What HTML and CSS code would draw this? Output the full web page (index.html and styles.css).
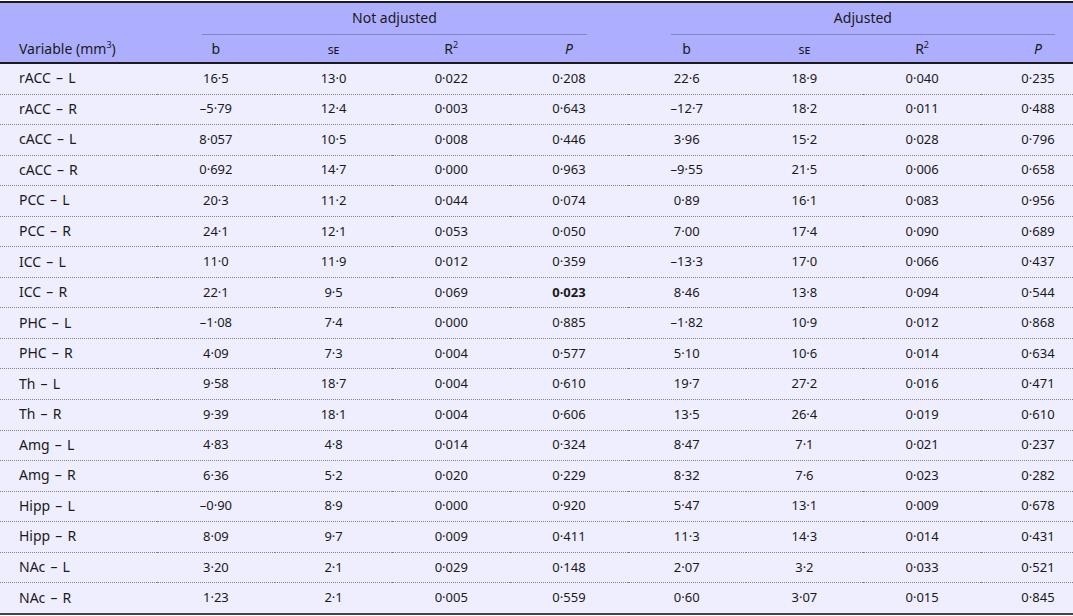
FILE: index.html
```html
<!DOCTYPE html>
<html>
<head>
<meta charset="utf-8">
<link rel="stylesheet" href="styles.css">
</head>
<body>
<table class="tbl">
<colgroup>
<col class="c0"><col class="cn"><col class="cn"><col class="cn"><col class="cn"><col class="cn"><col class="cn"><col class="cn"><col class="clast">
</colgroup>
<thead>
<tr class="h1">
<th></th>
<th colspan="4"><div class="grp grp-a">Not adjusted</div></th>
<th colspan="4"><div class="grp grp-b">Adjusted</div></th>
</tr>
<tr class="h2">
<th class="first">Variable (mm<sup>3</sup>)</th>
<th>b</th><th><span class="sc">se</span></th><th>R<sup>2</sup></th><th><i>P</i></th>
<th>b</th><th><span class="sc">se</span></th><th>R<sup>2</sup></th><th class="last"><i>P</i></th>
</tr>
</thead>
<tbody>
<tr><td class="first">rACC – L</td><td>16·5</td><td>13·0</td><td>0·022</td><td>0·208</td><td>22·6</td><td>18·9</td><td>0·040</td><td class="last">0·235</td></tr>
<tr><td class="first">rACC – R</td><td>–5·79</td><td>12·4</td><td>0·003</td><td>0·643</td><td>–12·7</td><td>18·2</td><td>0·011</td><td class="last">0·488</td></tr>
<tr><td class="first">cACC – L</td><td>8·057</td><td>10·5</td><td>0·008</td><td>0·446</td><td>3·96</td><td>15·2</td><td>0·028</td><td class="last">0·796</td></tr>
<tr><td class="first">cACC – R</td><td>0·692</td><td>14·7</td><td>0·000</td><td>0·963</td><td>–9·55</td><td>21·5</td><td>0·006</td><td class="last">0·658</td></tr>
<tr><td class="first">PCC – L</td><td>20·3</td><td>11·2</td><td>0·044</td><td>0·074</td><td>0·89</td><td>16·1</td><td>0·083</td><td class="last">0·956</td></tr>
<tr><td class="first">PCC – R</td><td>24·1</td><td>12·1</td><td>0·053</td><td>0·050</td><td>7·00</td><td>17·4</td><td>0·090</td><td class="last">0·689</td></tr>
<tr><td class="first">ICC – L</td><td>11·0</td><td>11·9</td><td>0·012</td><td>0·359</td><td>–13·3</td><td>17·0</td><td>0·066</td><td class="last">0·437</td></tr>
<tr><td class="first">ICC – R</td><td>22·1</td><td>9·5</td><td>0·069</td><td><b>0·023</b></td><td>8·46</td><td>13·8</td><td>0·094</td><td class="last">0·544</td></tr>
<tr><td class="first">PHC – L</td><td>–1·08</td><td>7·4</td><td>0·000</td><td>0·885</td><td>–1·82</td><td>10·9</td><td>0·012</td><td class="last">0·868</td></tr>
<tr><td class="first">PHC – R</td><td>4·09</td><td>7·3</td><td>0·004</td><td>0·577</td><td>5·10</td><td>10·6</td><td>0·014</td><td class="last">0·634</td></tr>
<tr><td class="first">Th – L</td><td>9·58</td><td>18·7</td><td>0·004</td><td>0·610</td><td>19·7</td><td>27·2</td><td>0·016</td><td class="last">0·471</td></tr>
<tr><td class="first">Th – R</td><td>9·39</td><td>18·1</td><td>0·004</td><td>0·606</td><td>13·5</td><td>26·4</td><td>0·019</td><td class="last">0·610</td></tr>
<tr><td class="first">Amg – L</td><td>4·83</td><td>4·8</td><td>0·014</td><td>0·324</td><td>8·47</td><td>7·1</td><td>0·021</td><td class="last">0·237</td></tr>
<tr><td class="first">Amg – R</td><td>6·36</td><td>5·2</td><td>0·020</td><td>0·229</td><td>8·32</td><td>7·6</td><td>0·023</td><td class="last">0·282</td></tr>
<tr><td class="first">Hipp – L</td><td>–0·90</td><td>8·9</td><td>0·000</td><td>0·920</td><td>5·47</td><td>13·1</td><td>0·009</td><td class="last">0·678</td></tr>
<tr><td class="first">Hipp – R</td><td>8·09</td><td>9·7</td><td>0·009</td><td>0·411</td><td>11·3</td><td>14·3</td><td>0·014</td><td class="last">0·431</td></tr>
<tr><td class="first">NAc – L</td><td>3·20</td><td>2·1</td><td>0·029</td><td>0·148</td><td>2·07</td><td>3·2</td><td>0·033</td><td class="last">0·521</td></tr>
<tr><td class="first">NAc – R</td><td>1·23</td><td>2·1</td><td>0·005</td><td>0·559</td><td>0·60</td><td>3·07</td><td>0·015</td><td class="last">0·845</td></tr>
</tbody>
</table>
</body>
</html>
```
FILE: styles.css
```css
html, body {
  margin: 0;
  padding: 0;
  background: #ffffff;
}
body {
  padding-top: 1px;
  font-family: "Noto Sans", "Open Sans", sans-serif;
  font-size: 13px;
  color: #1a1a1a;
}
.tbl {
  width: 1073px;
  table-layout: fixed;
  border-collapse: collapse;
  border-top: 2px solid #1a1a1a;
  border-bottom: 2px solid #444;
}
.c0 { width: 157px; }
.cn { width: 117.7px; }
.clast { width: 92px; }

thead tr { background: #aeaefe; }
thead th {
  font-weight: normal;
  font-size: 14px;
  padding: 0;
  text-align: center;
  white-space: nowrap;
}
.h1 th { height: 32px; vertical-align: bottom; }
.h2 th { height: 27px; vertical-align: middle; }
.h2 { border-bottom: 2px solid #1a1a1a; }
.grp {
  border-bottom: 1px solid #8484c4;
  padding-bottom: 6px;
  line-height: 20px;
}
.grp-a { margin: 0 41px 0 45px; }
.grp-b { margin: 0 18px 0 43px; }
sup { font-size: 9px; line-height: 0; vertical-align: 6px; }
.sc { font-variant: small-caps; font-size: 13px; }

tbody tr { background: #eeeeff; }
tbody td {
  height: 27.56px;
  padding: 0 0 2px 0;
  text-align: center;
  white-space: nowrap;
  border-bottom: 1px dotted #80808e;
}
tbody tr:last-child td { border-bottom: none; }
.first { text-align: left; padding-left: 19px; }
tbody td.first { font-size: 14px; word-spacing: 1.5px; }
thead th.first { text-align: left; padding-left: 19px; }
.last { padding-left: 22px; }
b { font-weight: bold; }
```
